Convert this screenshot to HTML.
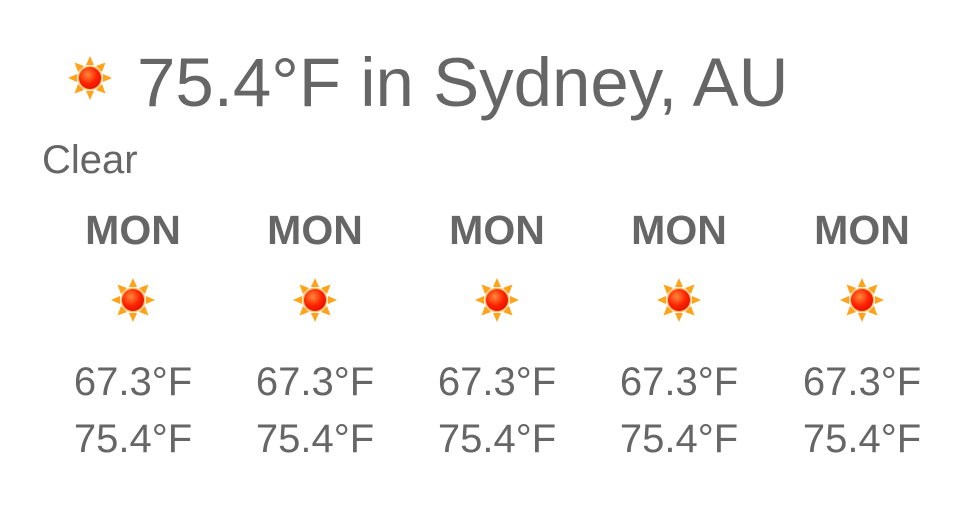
<!DOCTYPE html>
<html><head><meta charset="utf-8"><style>
body{margin:0;width:969px;height:523px;background:#fff;position:relative;overflow:hidden;font-family:"Liberation Sans",sans-serif;color:#666}
.t{position:absolute;white-space:nowrap;line-height:1}
svg{position:absolute}
</style></head><body>
<svg width="0" height="0" style="position:absolute"><defs>
<radialGradient id="g" cx="0.4" cy="0.35" r="0.7"><stop offset="0" stop-color="#ff8a3a"/><stop offset="0.6" stop-color="#ff2200"/><stop offset="1" stop-color="#e01000"/></radialGradient>
<g id="sun">
<g fill="#ffa31a">
<polygon points="0,-22 -4,-13 4,-13"/><polygon points="0,22 -4,13 4,13"/>
<polygon points="-22,0 -13,-4 -13,4"/><polygon points="22,0 13,-4 13,4"/>
<polygon points="-15.5,-15.5 -12,-6 -6,-12"/><polygon points="15.5,-15.5 12,-6 6,-12"/>
<polygon points="-15.5,15.5 -12,6 -6,12"/><polygon points="15.5,15.5 12,6 6,12"/>
</g>
<circle r="12.5" fill="#ffc070"/><circle r="11" fill="url(#g)"/>
</g></defs></svg>
<svg style="left:68px;top:56px" width="44" height="44" viewBox="-22 -22 44 44"><use href="#sun"/></svg>
<div class="t" style="left:137px;top:48px;font-size:69px">75.4°F in Sydney, AU</div>
<div class="t" style="left:42px;top:140px;font-size:40px">Clear</div>

<div class="t" style="left:43px;width:180px;text-align:center;top:210px;font-size:41px;font-weight:bold">MON</div>
<div class="t" style="left:225px;width:180px;text-align:center;top:210px;font-size:41px;font-weight:bold">MON</div>
<div class="t" style="left:407px;width:180px;text-align:center;top:210px;font-size:41px;font-weight:bold">MON</div>
<div class="t" style="left:589px;width:180px;text-align:center;top:210px;font-size:41px;font-weight:bold">MON</div>
<div class="t" style="left:772px;width:180px;text-align:center;top:210px;font-size:41px;font-weight:bold">MON</div>

<svg style="left:111px;top:278px" width="44" height="44" viewBox="-22 -22 44 44"><use href="#sun"/></svg>
<svg style="left:293px;top:278px" width="44" height="44" viewBox="-22 -22 44 44"><use href="#sun"/></svg>
<svg style="left:475px;top:278px" width="44" height="44" viewBox="-22 -22 44 44"><use href="#sun"/></svg>
<svg style="left:657px;top:278px" width="44" height="44" viewBox="-22 -22 44 44"><use href="#sun"/></svg>
<svg style="left:840px;top:278px" width="44" height="44" viewBox="-22 -22 44 44"><use href="#sun"/></svg>

<div class="t" style="left:43px;width:180px;text-align:center;top:362px;font-size:40px">67.3°F</div>
<div class="t" style="left:225px;width:180px;text-align:center;top:362px;font-size:40px">67.3°F</div>
<div class="t" style="left:407px;width:180px;text-align:center;top:362px;font-size:40px">67.3°F</div>
<div class="t" style="left:589px;width:180px;text-align:center;top:362px;font-size:40px">67.3°F</div>
<div class="t" style="left:772px;width:180px;text-align:center;top:362px;font-size:40px">67.3°F</div>

<div class="t" style="left:43px;width:180px;text-align:center;top:419px;font-size:40px">75.4°F</div>
<div class="t" style="left:225px;width:180px;text-align:center;top:419px;font-size:40px">75.4°F</div>
<div class="t" style="left:407px;width:180px;text-align:center;top:419px;font-size:40px">75.4°F</div>
<div class="t" style="left:589px;width:180px;text-align:center;top:419px;font-size:40px">75.4°F</div>
<div class="t" style="left:772px;width:180px;text-align:center;top:419px;font-size:40px">75.4°F</div>
</body></html>
